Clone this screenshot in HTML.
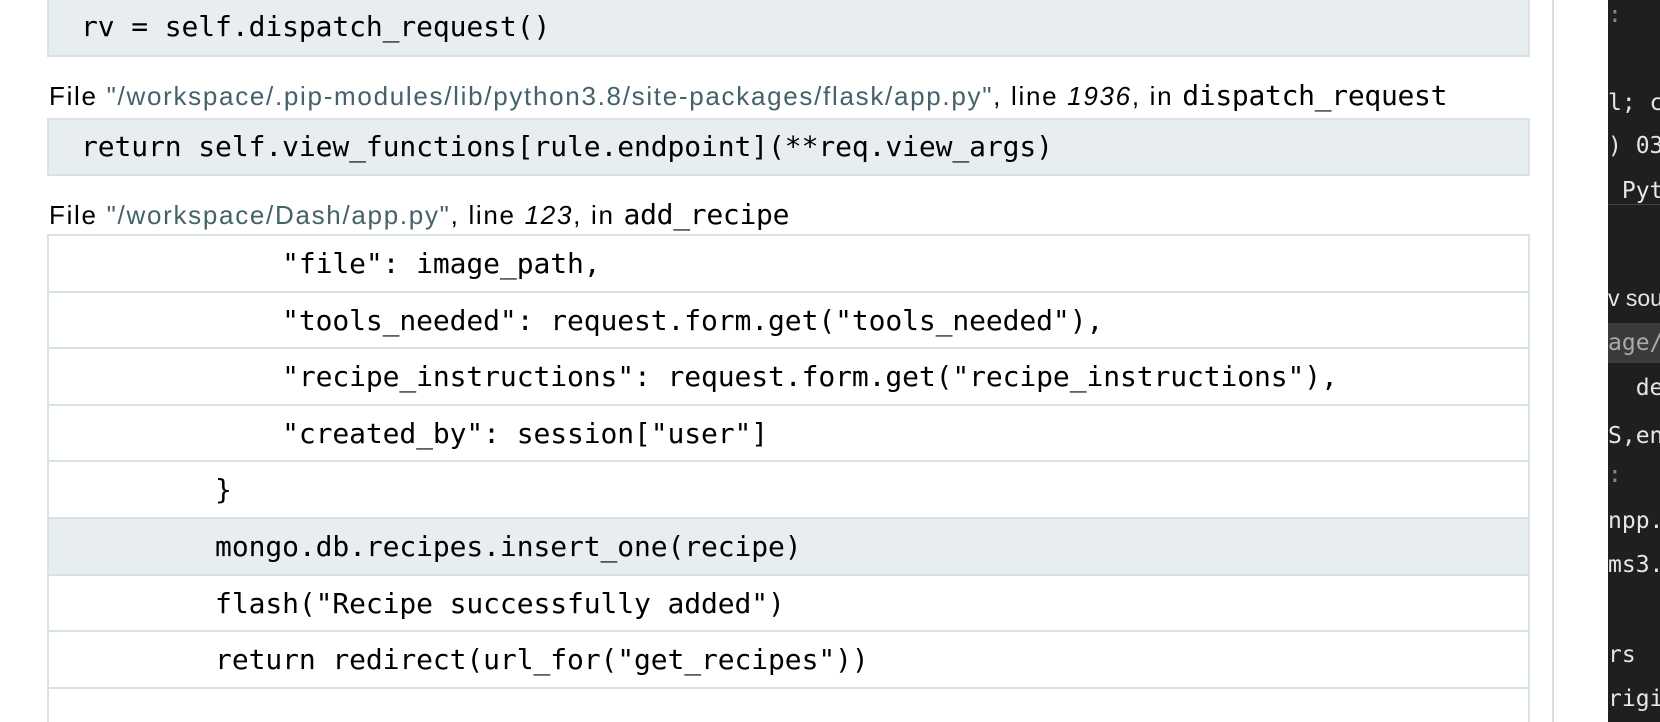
<!DOCTYPE html>
<html><head><meta charset="utf-8"><style>
html,body{margin:0;padding:0;width:1660px;height:722px;overflow:hidden;background:#fff;position:relative}
.mono{font-family:"DejaVu Sans Mono","Liberation Mono",monospace}
.box{position:absolute;left:47px;width:1483px;background:#e8eef0;border:2px solid #d5e3e6;box-sizing:border-box;font-size:28px;color:#000;white-space:pre;padding-left:32px;line-height:53px;letter-spacing:-0.1px}
.file{position:absolute;left:49px;font-family:"Liberation Sans",sans-serif;font-size:26px;letter-spacing:1.7px;color:#000;white-space:pre}
.file .p{color:#44626a}
.file .fn{font-family:"DejaVu Sans Mono",monospace;font-size:28px;letter-spacing:-0.3px}
.tbl{position:absolute;left:47px;top:234px;width:1483px;border:2px solid #d5e3e6;border-bottom:none;box-sizing:border-box}
.row{height:56.6px;line-height:56px;border-bottom:2px solid #d5e3e6;box-sizing:border-box;font-size:28px;white-space:pre;padding-left:32px;letter-spacing:-0.1px}
.row.hl{background:#e8eef0}
.vline{position:absolute;left:1552px;top:0;width:2px;height:722px;background:#dcdcdc}
.dark{position:absolute;left:1608px;top:0;width:52px;height:722px;background:#1f1f1f;overflow:hidden}
.dark div{position:absolute;left:0;color:#e6e6e6;font-family:"DejaVu Sans Mono",monospace;font-size:23px;white-space:pre}
</style></head><body>
<div class="box mono" style="top:0;height:57px;border-top:none">rv = self.dispatch_request()</div>
<div class="file" style="top:79px">File <span class="p">"/workspace/.pip-modules/lib/python3.8/site-packages/flask/app.py"</span>, line <i>1936</i>, in <span class="fn">dispatch_request</span></div>
<div class="box mono" style="top:118px;height:58px">return self.view_functions[rule.endpoint](**req.view_args)</div>
<div class="file" style="top:198px">File <span class="p">"/workspace/Dash/app.py"</span>, line <i>123</i>, in <span class="fn">add_recipe</span></div>
<div class="tbl mono">
<div class="row">            "file": image_path,</div>
<div class="row">            "tools_needed": request.form.get("tools_needed"),</div>
<div class="row">            "recipe_instructions": request.form.get("recipe_instructions"),</div>
<div class="row">            "created_by": session["user"]</div>
<div class="row">        }</div>
<div class="row hl">        mongo.db.recipes.insert_one(recipe)</div>
<div class="row">        flash("Recipe successfully added")</div>
<div class="row">        return redirect(url_for("get_recipes"))</div>
<div class="row"> </div>
</div>
<div class="vline"></div>
<div class="dark">
<div style="top:2px;color:#888">:</div>
<div style="top:90px">l; c</div>
<div style="top:133px">) 03:</div>
<div style="top:178px"> Pyt</div>
<div style="top:204px;width:52px;height:1px;background:#444"></div>
<div style="top:285px;font-family:'Liberation Sans',sans-serif">v sou</div>
<div style="top:323px;background:#3a3a3a;width:52px;height:40px;color:#aaa;line-height:40px">age/w</div>
<div style="top:375px">  def</div>
<div style="top:423px">S,en</div>
<div style="top:462px;color:#888">:</div>
<div style="top:508px">npp.c</div>
<div style="top:552px">ms3.l</div>
<div style="top:642px">rs</div>
<div style="top:686px">rigin</div>
</div>
</body></html>
